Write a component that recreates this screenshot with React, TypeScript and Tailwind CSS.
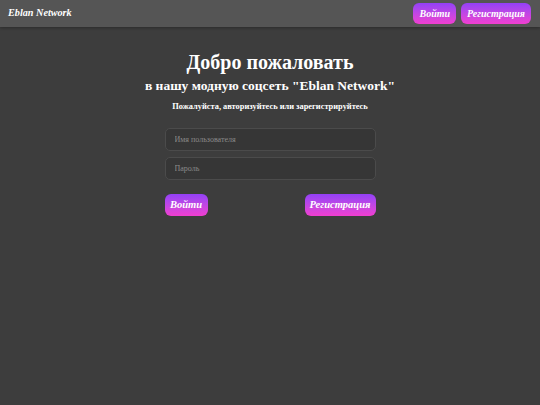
const serif = { fontFamily: '"Liberation Serif", "Times New Roman", serif' };

function GradientButton({ children, className = '' }: { children: React.ReactNode; className?: string }) {
  return (
    <button
      className={`rounded-[6px] bg-linear-to-b from-[#9340f7] to-[#f03dd0] font-bold italic text-white ${className}`}
    >
      {children}
    </button>
  );
}

export default function App() {
  return (
    <div className="min-h-[405px] w-full bg-[#3d3d3d] text-white" style={serif}>
      {/* Header */}
      <header className="flex h-[27px] items-center justify-between bg-[#555555] pl-[8px] pr-[9px] shadow-[0_1px_3px_rgba(0,0,0,0.3)]">
        <span className="text-[10.2px] font-bold italic leading-none">Eblan Network</span>
        <div className="flex gap-[5px]">
          <GradientButton className="h-[21px] px-[6px] text-[10px] leading-none">Войти</GradientButton>
          <GradientButton className="h-[21px] px-[6px] text-[10px] leading-none">Регистрация</GradientButton>
        </div>
      </header>

      {/* Login card */}
      <main className="mx-auto flex w-[211px] flex-col items-center pt-[23px]">
        <h1 className="whitespace-nowrap text-[20px] font-bold leading-[24px]">Добро пожаловать</h1>
        <h2 className="mt-[3px] whitespace-nowrap text-[13.5px] font-bold leading-[18px]">
          в нашу модную соцсеть "Eblan Network"
        </h2>
        <p className="mt-[6px] whitespace-nowrap text-[8.4px] font-bold leading-[11px]">
          Пожалуйста, авторизуйтесь или зарегистрируйтесь
        </p>

        <form className="mt-[16px] flex w-full flex-col gap-[6px]">
          <input
            placeholder="Имя пользователя"
            className="h-[23px] w-full rounded-[5px] border border-[#4b4b4b] bg-[#363636] px-[9px] text-[8px] text-white outline-none placeholder:text-[#8a8a8a]"
            style={serif}
          />
          <input
            type="password"
            placeholder="Пароль"
            className="h-[23px] w-full rounded-[5px] border border-[#4b4b4b] bg-[#363636] px-[9px] text-[8px] text-white outline-none placeholder:text-[#8a8a8a]"
            style={serif}
          />
          <div className="mt-[8px] flex justify-between">
            <GradientButton className="h-[22px] w-[43px] text-[10.5px] leading-none">Войти</GradientButton>
            <GradientButton className="h-[22px] w-[71px] text-[10.5px] leading-none">Регистрация</GradientButton>
          </div>
        </form>
      </main>
    </div>
  );
}
